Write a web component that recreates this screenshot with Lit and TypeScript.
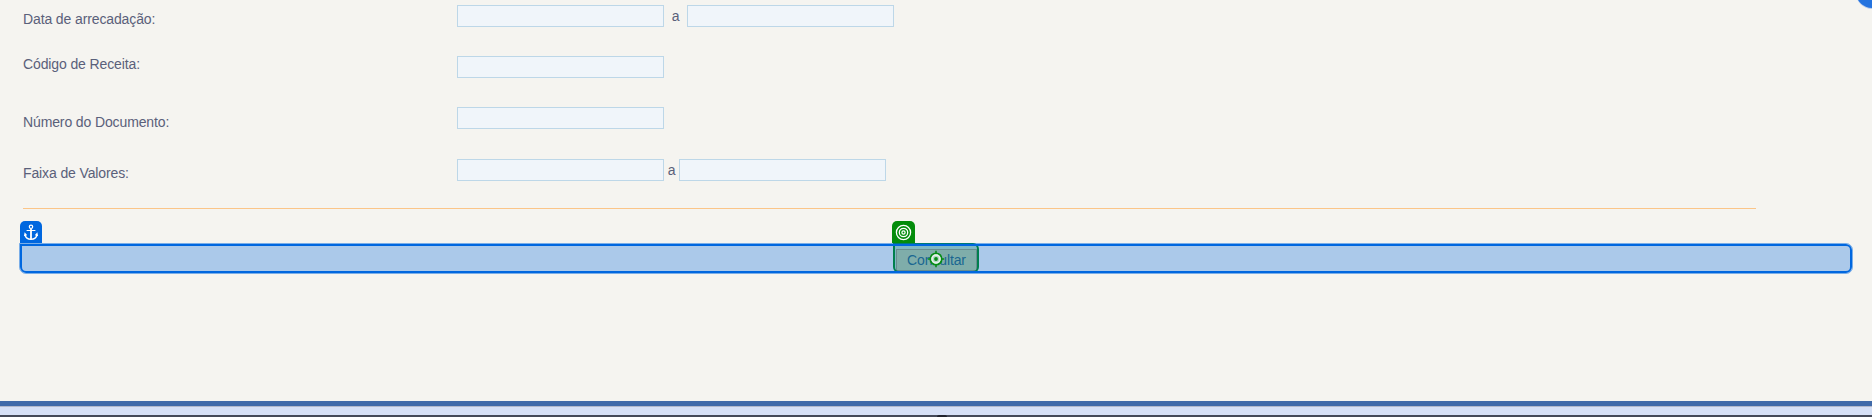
import { LitElement, html, css, svg } from "lit";
import { customElement } from "lit/decorators.js";

const anchor = svg`<g fill="none" stroke="#fff" stroke-width="1.2">
  <circle cx="11" cy="5.8" r="1.700"/>
  <path stroke-width="1.800" d="M11 7.500V18"/>
  <path d="M6.600 9.500h8.800M5 14c.6 2.800 3 4.200 6 4.400 3-.2 5.400-1.600 6-4.400M4.500 15.200l.5-2.700 1.600 1.900M17.500 15.200l-.5-2.700-1.600 1.900"/>
</g>`;

const target = svg`<g fill="none" stroke="#fff" stroke-width="1.3">
  <circle cx="11.500" cy="11.500" r="7.100"/>
  <circle cx="11.500" cy="11.500" r="4.200"/>
  <circle cx="11.500" cy="11.500" r="1.600"/>
</g>`;

@customElement("app-root")
export class AppRoot extends LitElement {
  static styles = css`
    :host {
      display: flex;
      flex-direction: column;
      position: relative;
      height: 417px;
      overflow: hidden;
      background: #f5f4f0;
      color: #5a607a;
      font: 14px/16px "Liberation Sans", Arial, sans-serif;
      letter-spacing: -0.12px;
    }
    .form {
      display: grid;
      grid-template-columns: 434px auto;
      grid-template-rows: 51px 51px 52px 49px;
      padding: 5px 0 0 23px;
    }
    .label { padding-top: 6px; }
    .label.code { padding-top: 0; }
    .label.doc { padding-top: 7px; }
    .fields { display: flex; align-items: flex-start; }
    .input {
      box-sizing: border-box;
      width: 207px;
      height: 22px;
      margin: 0;
      padding: 0 4px;
      border: 1px solid #bdd7e8;
      border-radius: 0;
      background: #f0f5fa;
      font: inherit;
      outline: none;
    }
    .to { width: 23px; padding-top: 3px; text-align: center; }
    .to.tight { width: 15px; }
    .rule { height: 1px; width: 1733px; margin-left: 23px; background: #fbc588; }
    .actions {
      position: relative;
      box-sizing: border-box;
      width: 1833px;
      height: 31px;
      margin: 34px 0 0 20px;
      padding: 6px 0 0 876px;
    }
    .button {
      box-sizing: border-box;
      display: block;
      width: 81px;
      height: 22px;
      margin: 0;
      padding: 0 0 1px;
      border: 1px solid #c9a58c;
      background: #f3e2c0;
      color: #375a90;
      font: inherit;
      letter-spacing: inherit;
      text-align: center;
    }
    .pick {
      position: absolute;
      box-sizing: border-box;
      left: 873px;
      top: 0;
      width: 86px;
      height: 30px;
      border: 2px solid #008a10;
      border-radius: 0 6px 6px 6px;
      background: rgba(0, 138, 16, 0.25);
    }
    .area {
      position: absolute;
      box-sizing: border-box;
      inset: 0 0 0 -1px;
      border: 1px solid rgba(0, 103, 223, 0.5);
      border-radius: 0 7px 7px 7px;
    }
    .area::after {
      content: "";
      display: block;
      box-sizing: border-box;
      height: 29px;
      border: 2px solid #0067df;
      border-radius: 0 6px 6px 6px;
      background: rgba(0, 103, 223, 0.3);
    }
    .tab { position: absolute; top: -22px; height: 22px; border-radius: 5px 5px 0 0; }
    .tab.blue { left: -0.5px; width: 22.5px; background: #0067df; }
    .tab.green { left: 872.4px; width: 22.6px; background: #038c0b; }
    .tab svg, .cross { display: block; }
    .cross { position: absolute; left: 906.5px; top: 6.7px; }
    .corner {
      position: absolute;
      right: -24px;
      top: -32px;
      width: 40px;
      height: 40px;
      border-radius: 16px;
      background: #2473df;
      box-shadow: 0 1px 0 #b7cbed;
    }
    .footer {
      box-sizing: border-box;
      height: 16px;
      margin-top: auto;
      border-top: 5px solid #406aa9;
      border-bottom: 2px solid #444958;
      background: linear-gradient(#b2b8cb 1px, #d6e0f6 1px);
      position: relative;
    }
    .mark {
      position: absolute;
      left: 937px;
      top: 9px;
      width: 10px;
      height: 2px;
      border-radius: 4px 4px 0 0;
      background: #20232d;
    }
  `;

  private input(name: string) {
    return html`<input class="input" aria-label=${name} />`;
  }

  render() {
    return html`
      <div class="form">
        <div class="label">Data de arrecadação:</div>
        <div class="fields">${this.input("Data inicial")}<span class="to">a</span>${this.input("Data final")}</div>
        <div class="label code">Código de Receita:</div>
        <div class="fields">${this.input("Código de Receita")}</div>
        <div class="label doc">Número do Documento:</div>
        <div class="fields">${this.input("Número do Documento")}</div>
        <div class="label">Faixa de Valores:</div>
        <div class="fields">${this.input("Valor inicial")}<span class="to tight">a</span>${this.input("Valor final")}</div>
      </div>
      <div class="rule"></div>
      <div class="actions">
        <button class="button">Consultar</button>
        <div class="pick"></div>
        <div class="area"></div>
        <div class="tab blue"><svg width="22" height="22">${anchor}</svg></div>
        <div class="tab green"><svg width="23" height="22">${target}</svg></div>
        <svg class="cross" width="18" height="18" viewBox="0 0 18 18">
          <circle cx="9" cy="9" r="5.700" fill="#b5d8c4" stroke="#078c16" stroke-width="1.800"/>
          <circle cx="9" cy="9" r="4" fill="none" stroke="#e8f3ee" stroke-width="1.500"/>
          <circle cx="9" cy="9" r="1.900" fill="#078c16"/>
          <path d="M9 .8v3M9 14.200v3M.8 9h3M14.200 9h3" stroke="#078c16" stroke-width="1.600"/>
        </svg>
      </div>
      <div class="corner"></div>
      <div class="footer"><div class="mark"></div></div>
    `;
  }
}
